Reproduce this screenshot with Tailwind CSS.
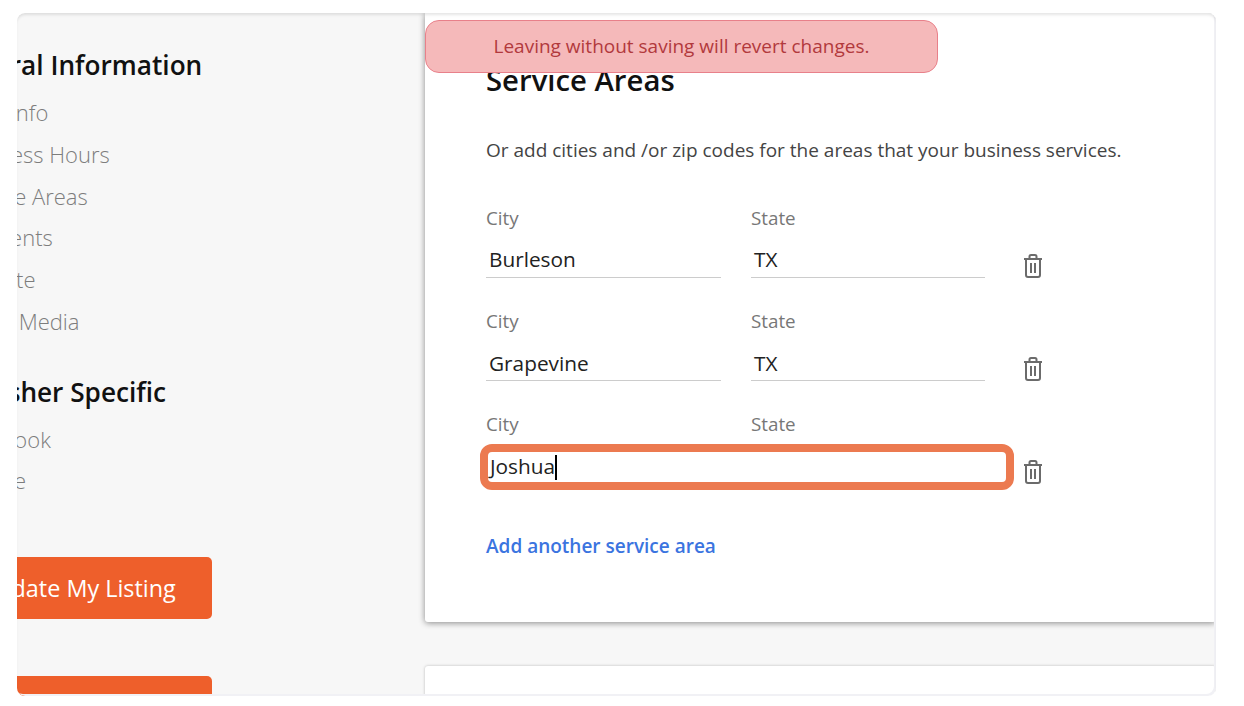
<!DOCTYPE html>
<html lang="en">
<head>
  <meta charset="UTF-8">
  <title>Service Areas</title>
  <script src="https://cdn.jsdelivr.net/npm/@tailwindcss/browser@4"></script>
</head>
<body class="bg-white h-[706px] overflow-hidden font-['Open_Sans',sans-serif]">
  <div class="pt-[13px] pl-[17px] w-[1216px]">
    <!-- screenshot frame -->
    <div class="relative flex h-[683px] w-[1199px] overflow-hidden rounded-lg bg-[#f7f7f7]">

      <!-- sidebar, scrolled off to the left -->
      <div class="w-[408px] shrink-0 overflow-hidden">
        <div class="-ml-[77px] w-[272px] pt-[33px]">
          <h2 class="pl-[4px] text-[26.2px] leading-[38px] font-[550] text-[#111] whitespace-nowrap">General Information</h2>
          <ul class="mt-[8px] pl-[16px] text-[22px] font-light leading-[41.8px] text-[#7d7d7d] whitespace-nowrap">
            <li>Main Info</li>
            <li>Business Hours</li>
            <li>Service Areas</li>
            <li>Payments</li>
            <li>Website</li>
            <li>Social Media</li>
          </ul>
          <h2 class="mt-[30px] pl-[4px] text-[26.2px] leading-[38px] font-[550] text-[#111] whitespace-nowrap">Publisher Specific</h2>
          <ul class="mt-[8px] pl-[16px] text-[22px] font-light leading-[41px] text-[#7d7d7d] whitespace-nowrap">
            <li>Facebook</li>
            <li>Google</li>
          </ul>
          <button class="ml-[4px] mt-[56px] flex h-[62px] w-[268px] items-center justify-center rounded-[5px] bg-[#ee5f2b] pt-[2px] text-[23.4px] text-white whitespace-nowrap">Update My Listing</button>
          <button class="mt-[57px] h-[62px] w-full rounded-[5px] bg-[#ee5f2b]"></button>
        </div>
      </div>

      <!-- main column -->
      <div class="flex-1 min-w-0">
        <section class="h-[609px] rounded-b-[3px] bg-white pl-[61px] pt-[47px] shadow-[0_1px_6px_rgba(0,0,0,0.45)]">
          <h1 class="text-[29.3px] leading-[40px] font-[550] text-[#111]">Service Areas</h1>
          <p class="mt-[36px] text-[19px] leading-[28px] text-[#444]">Or add cities and /or zip codes for the areas that your business services.</p>

          <div class="mt-[42px] flex items-end">
            <label class="w-[235px] text-[18.8px] leading-[24px] text-[#777]">City
              <span class="mt-[16px] block h-[32px] border-b border-[#ccc] pl-[3px] text-[20.8px] leading-[26px] text-[#222]">Burleson</span>
            </label>
            <label class="ml-[30px] w-[234px] text-[18.8px] leading-[24px] text-[#777]">State
              <span class="mt-[16px] block h-[32px] border-b border-[#ccc] pl-[3px] text-[20.8px] leading-[26px] text-[#222]">TX</span>
            </label>
            <svg class="ml-[38px]" width="20" height="24" viewBox="0 0 20 24" fill="none" stroke="#6b6b6b" stroke-width="2"><path d="M1 5h18M6.500 5V2.500A1.500 1.500 0 0 1 8 1h4a1.500 1.500 0 0 1 1.500 1.500V5M3 5v16a2 2 0 0 0 2 2h10a2 2 0 0 0 2-2V5M8 9v10M12 9v10"/></svg>
          </div>

          <div class="mt-[31px] flex items-end">
            <label class="w-[235px] text-[18.8px] leading-[24px] text-[#777]">City
              <span class="mt-[16px] block h-[32px] border-b border-[#ccc] pl-[3px] text-[20.8px] leading-[28px] text-[#222]">Grapevine</span>
            </label>
            <label class="ml-[30px] w-[234px] text-[18.8px] leading-[24px] text-[#777]">State
              <span class="mt-[16px] block h-[32px] border-b border-[#ccc] pl-[3px] text-[20.8px] leading-[28px] text-[#222]">TX</span>
            </label>
            <svg class="ml-[38px]" width="20" height="24" viewBox="0 0 20 24" fill="none" stroke="#6b6b6b" stroke-width="2"><path d="M1 5h18M6.500 5V2.500A1.500 1.500 0 0 1 8 1h4a1.500 1.500 0 0 1 1.500 1.500V5M3 5v16a2 2 0 0 0 2 2h10a2 2 0 0 0 2-2V5M8 9v10M12 9v10"/></svg>
          </div>

          <div class="mt-[31px] flex items-end">
            <div>
              <div class="flex text-[18.8px] leading-[24px] text-[#777]">
                <span class="w-[265px]">City</span>
                <span>State</span>
              </div>
              <div class="-ml-[6px] mt-[8px] -mb-[6px] flex h-[46px] w-[534px] items-center rounded-[12px] border-[8px] border-[#ec7a50] bg-white pl-[2px] text-[20.8px] text-[#222]">
                <span>Joshua</span><span class="h-[25px] w-[1.5px] bg-black"></span>
              </div>
            </div>
            <svg class="ml-[9px]" width="20" height="24" viewBox="0 0 20 24" fill="none" stroke="#6b6b6b" stroke-width="2"><path d="M1 5h18M6.500 5V2.500A1.500 1.500 0 0 1 8 1h4a1.500 1.500 0 0 1 1.500 1.500V5M3 5v16a2 2 0 0 0 2 2h10a2 2 0 0 0 2-2V5M8 9v10M12 9v10"/></svg>
          </div>

          <a class="mt-[48px] block text-[19px] leading-[28px] font-semibold text-[#3b74e0]">Add another service area</a>
        </section>
        <section class="mt-[44px] h-[40px] rounded-t-[3px] bg-white shadow-[0_0_3px_rgba(0,0,0,0.25)]"></section>
      </div>

      <!-- unsaved changes toast -->
      <div class="absolute left-[408px] top-[7px] flex h-[53px] w-[513px] items-center justify-center rounded-[14px] border border-[#e8808a] bg-[#f5b9ba] text-[19px] text-[#b2393d]">Leaving without saving will revert changes.</div>

      <!-- top edge shading and pale rim of the frame -->
      <div class="pointer-events-none absolute inset-0 rounded-lg shadow-[inset_0_3px_3px_-1px_rgba(0,0,0,0.1),inset_-2px_-2px_0_#f1f1f5]"></div>
    </div>
  </div>
</body>
</html>
